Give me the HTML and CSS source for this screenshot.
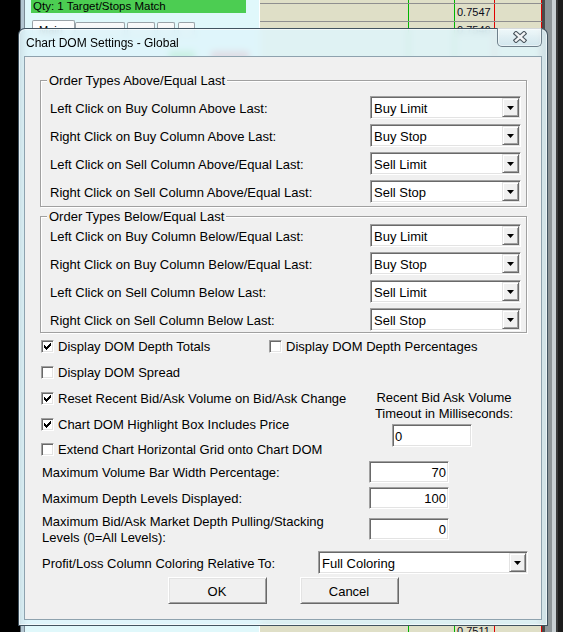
FILE: index.html
```html
<!DOCTYPE html>
<html>
<head>
<meta charset="utf-8">
<title>Chart DOM Settings - Global</title>
<link rel="stylesheet" href="styles.css">
</head>
<body>
<div class="desk">
  <div class="edge-l"></div>
  <div class="panel">
    <div class="qty">Qty: 1 Target/Stops Match</div>
    <div class="tabs">
      <div class="tab t1">Main</div>
      <div class="tab t2"></div>
      <div class="tab t3"></div>
      <div class="tab t4"></div>
      <div class="tab t5"></div>
    </div>
    <div class="pbtns"><span class="pb green"></span><span class="pb red"></span></div>
  </div>
  <div class="ladder">
    <div class="lrow pad"><span></span><span></span><span></span><span></span></div>
    <div class="lrow line"><span></span><span></span><span class="price">0.7547</span><span></span></div>
    <div class="lrow line"><span></span><span></span><span class="price">0.7546</span><span></span></div>
    <div class="lrow fill"><span></span><span></span><span></span><span></span></div>
    <div class="lrow line"><span></span><span></span><span class="price">0.7511</span><span></span></div>
  </div>
  <div class="edge-r"></div>
</div>

<div class="dialog">
  <div class="titlebar">
    <div class="title">Chart DOM Settings - Global</div>
    <div class="close">
      <svg width="14" height="12" viewBox="0 0 14 12">
        <path d="M3 2.5 L11 9.5 M11 2.5 L3 9.5" stroke="#4a565e" stroke-width="4.6" stroke-linecap="square" fill="none"/>
        <path d="M3 2.5 L11 9.5 M11 2.5 L3 9.5" stroke="#f2f4f5" stroke-width="2.4" stroke-linecap="square" fill="none"/>
      </svg>
    </div>
  </div>
  <div class="client">
    <fieldset class="grp g1">
      <legend>Order Types Above/Equal Last</legend>
      <div class="rows">
        <div class="frow"><span class="lbl">Left Click on Buy Column Above Last:</span><div class="combo"><span class="ctext">Buy Limit</span><span class="cbtn"><svg width="7" height="4" viewBox="0 0 7 4"><path d="M0 0h7L3.5 4z"/></svg></span></div></div>
        <div class="frow"><span class="lbl">Right Click on Buy Column Above Last:</span><div class="combo"><span class="ctext">Buy Stop</span><span class="cbtn"><svg width="7" height="4" viewBox="0 0 7 4"><path d="M0 0h7L3.5 4z"/></svg></span></div></div>
        <div class="frow"><span class="lbl">Left Click on Sell Column Above/Equal Last:</span><div class="combo"><span class="ctext">Sell Limit</span><span class="cbtn"><svg width="7" height="4" viewBox="0 0 7 4"><path d="M0 0h7L3.5 4z"/></svg></span></div></div>
        <div class="frow"><span class="lbl">Right Click on Sell Column Above/Equal Last:</span><div class="combo"><span class="ctext">Sell Stop</span><span class="cbtn"><svg width="7" height="4" viewBox="0 0 7 4"><path d="M0 0h7L3.5 4z"/></svg></span></div></div>
      </div>
    </fieldset>
    <fieldset class="grp g2">
      <legend>Order Types Below/Equal Last</legend>
      <div class="rows">
        <div class="frow"><span class="lbl">Left Click on Buy Column Below/Equal Last:</span><div class="combo"><span class="ctext">Buy Limit</span><span class="cbtn"><svg width="7" height="4" viewBox="0 0 7 4"><path d="M0 0h7L3.5 4z"/></svg></span></div></div>
        <div class="frow"><span class="lbl">Right Click on Buy Column Below/Equal Last:</span><div class="combo"><span class="ctext">Buy Stop</span><span class="cbtn"><svg width="7" height="4" viewBox="0 0 7 4"><path d="M0 0h7L3.5 4z"/></svg></span></div></div>
        <div class="frow"><span class="lbl">Left Click on Sell Column Below Last:</span><div class="combo"><span class="ctext">Sell Limit</span><span class="cbtn"><svg width="7" height="4" viewBox="0 0 7 4"><path d="M0 0h7L3.5 4z"/></svg></span></div></div>
        <div class="frow"><span class="lbl">Right Click on Sell Column Below Last:</span><div class="combo"><span class="ctext">Sell Stop</span><span class="cbtn"><svg width="7" height="4" viewBox="0 0 7 4"><path d="M0 0h7L3.5 4z"/></svg></span></div></div>
      </div>
    </fieldset>

    <div class="checks">
      <div class="crow two">
        <div class="chk"><span class="box"><svg width="7" height="7" viewBox="0 0 7 7"><path d="M6 0h1v1h-1zM5 1h2v1h-2zM0 2h1v1h-1zM4 2h3v1h-3zM0 3h2v1h-2zM3 3h3v1h-3zM0 4h5v1h-5zM1 5h3v1h-3zM2 6h1v1h-1z"/></svg></span><span class="lbl">Display DOM Depth Totals</span></div>
        <div class="chk"><span class="box"></span><span class="lbl">Display DOM Depth Percentages</span></div>
      </div>
      <div class="crow"><div class="chk"><span class="box"></span><span class="lbl">Display DOM Spread</span></div></div>
      <div class="mid">
        <div class="crow"><div class="chk"><span class="box"><svg width="7" height="7" viewBox="0 0 7 7"><path d="M6 0h1v1h-1zM5 1h2v1h-2zM0 2h1v1h-1zM4 2h3v1h-3zM0 3h2v1h-2zM3 3h3v1h-3zM0 4h5v1h-5zM1 5h3v1h-3zM2 6h1v1h-1z"/></svg></span><span class="lbl">Reset Recent Bid/Ask Volume on Bid/Ask Change</span></div></div>
        <div class="crow"><div class="chk"><span class="box"><svg width="7" height="7" viewBox="0 0 7 7"><path d="M6 0h1v1h-1zM5 1h2v1h-2zM0 2h1v1h-1zM4 2h3v1h-3zM0 3h2v1h-2zM3 3h3v1h-3zM0 4h5v1h-5zM1 5h3v1h-3zM2 6h1v1h-1z"/></svg></span><span class="lbl">Chart DOM Highlight Box Includes Price</span></div></div>
        <div class="crow"><div class="chk"><span class="box"></span><span class="lbl">Extend Chart Horizontal Grid onto Chart DOM</span></div></div>
        <div class="timeout">
          <div class="tlabel">Recent Bid Ask Volume<br>Timeout in Milliseconds:</div>
          <div class="edit lft">0</div>
        </div>
      </div>
    </div>

    <div class="nums">
      <span class="lbl">Maximum Volume Bar Width Percentage:</span><div class="edit">70</div>
      <span class="lbl">Maximum Depth Levels Displayed:</span><div class="edit">100</div>
      <span class="lbl">Maximum Bid/Ask Market Depth Pulling/Stacking<br>Levels (0=All Levels):</span><div class="edit">0</div>
    </div>

    <div class="prow">
      <span class="lbl">Profit/Loss Column Coloring Relative To:</span>
      <div class="combo wide"><span class="ctext">Full Coloring</span><span class="cbtn"><svg width="7" height="4" viewBox="0 0 7 4"><path d="M0 0h7L3.5 4z"/></svg></span></div>
    </div>

    <div class="btns">
      <div class="btn">OK</div>
      <div class="btn">Cancel</div>
    </div>
  </div>
</div>
</body>
</html>
```

FILE: styles.css
```css
* { box-sizing: border-box; }
html, body { margin: 0; padding: 0; }
body {
  width: 563px;
  height: 632px;
  overflow: hidden;
  position: relative;
  background: #000;
  font-family: "Liberation Sans", Arial, sans-serif;
  font-size: 13px;
  line-height: 16px;
  color: #000;
}

/* ---------- application behind the dialog ---------- */
.desk { display: flex; height: 632px; }
.edge-l {
  width: 25px;
  background: linear-gradient(90deg, #000 0 20px, #56626a 20px 21px, #b3c6d1 21px 24px, #7b8b95 24px 25px);
}
.panel {
  width: 235px;
  background: #e0f8fb;
  border-right: 1px solid #fff;
  display: flex;
  flex-direction: column;
}
.qty {
  margin-left: 6px;
  width: 215px;
  height: 13px;
  background: #4ccd52;
  font-size: 11.5px;
  line-height: 13px;
  padding-left: 2px;
  white-space: nowrap;
  overflow: hidden;
}
.tabs { display: flex; align-items: flex-start; margin: 7px 0 0 7px; height: 16px; }
.tab {
  height: 16px;
  border: 1px solid #9aa3a8;
  border-bottom: none;
  border-radius: 2px 2px 0 0;
  background: linear-gradient(#fbfbfb, #e6e9eb);
  font-size: 11px;
  line-height: 14px;
  padding: 2px 0 0 6px;
  margin-top: 2px;
}
.t1 { width: 43px; margin-top: 0; background: #fdfdfd; }
.t2 { width: 50px; }
.t3 { width: 28px; margin-left: 2px; }
.t4 { width: 18px; margin-left: 2px; }
.t5 { width: 17px; margin-left: 3px; }
.pbtns { display: flex; margin-top: 15px; height: 12px; }
.pb { display: block; height: 12px; border-radius: 2px; }
.pb.green { width: 26px; margin-left: 144px; background: #54d35e; }
.pb.red { width: 38px; margin-left: 16px; background: #e2576a; }

.ladder {
  width: 282px;
  background: #dfdfc7;
  display: flex;
  flex-direction: column;
}
.lrow { display: grid; grid-template-columns: 148px 46px 40px 48px; height: 18px; flex: none; }
.lrow.pad { height: 3px; }
.lrow.fill { height: 583px; }
.lrow.line { border-top: 1px solid #8f8f8f; }
.lrow > span { border-left: 1px solid transparent; }
.lrow > span:nth-child(2), .lrow > span:nth-child(3) { border-left-color: #00b400; }
.lrow > span:nth-child(4) { border-left-color: #e00000; border-right: 1px solid #e00000; }
.price { font-size: 11px; line-height: 17px; padding-left: 2px; color: #0b0b1a; }

.edge-r {
  flex: 1;
  background: linear-gradient(90deg, #4a4a4a 0 3px, #8e9598 3px 10px, #c9d0d3 10px 14px, #3b3b3b 14px 16px, #1c1c1c 16px);
}

/* ---------- dialog ---------- */
.dialog {
  position: absolute;
  left: 18px;
  top: 28px;
  width: 530px;
  height: 598px;
  border: 1px solid rgba(38, 56, 70, 0.85);
  border-radius: 7px 7px 0 0;
  background: rgba(222, 244, 250, 0.86);
  backdrop-filter: blur(3px);
  box-shadow: inset 0 0 0 1px rgba(255, 255, 255, 0.6);
  display: flex;
  flex-direction: column;
}
.titlebar { height: 27px; display: flex; align-items: flex-start; justify-content: space-between; flex: none; }
.title { margin: 7px 0 0 7px; font-size: 12px; line-height: 15px; }
.close {
  width: 45px;
  height: 19px;
  margin: -1px 5px 0 0;
  border: 1px solid #6f808b;
  border-top: none;
  border-radius: 0 0 5px 5px;
  background: linear-gradient(rgba(255,255,255,0.55), rgba(200,222,232,0.6));
  box-shadow: inset 0 0 0 1px rgba(255,255,255,0.5);
  display: flex;
  align-items: center;
  justify-content: center;
}
.close svg { display: block; }
.client {
  flex: 1;
  margin: 0 5px 5px;
  border: 1px solid #8ea2ae;
  background: #f0f0f0;
}

/* nudge label text 1px lower without changing box size */
.lbl { padding-top: 1px; margin-bottom: -1px; }

/* group boxes */
.grp {
  margin: 0 14px 0 15px;
  padding: 8px 5px 3px 9px;
  border: 1px solid #a0a0a0;
  box-shadow: 1px 1px 0 #fff, inset 1px 1px 0 #fff;
  min-width: 0;
}
.g1 { margin-top: 16px; }
.g2 { margin-top: 2px; padding-top: 0; padding-bottom: 1px; }
legend {
  padding: 0 2px;
  margin-left: -3px;
  line-height: 15px;
  background: #f0f0f0;
}
.rows { display: flex; flex-direction: column; gap: 5px; }
.frow { height: 23px; display: flex; align-items: center; justify-content: space-between; white-space: nowrap; }

/* combo box */
.combo {
  width: 151px;
  height: 23px;
  display: flex;
  padding: 1px;
  border: 1px solid;
  border-color: #a0a0a0 #fff #fff #a0a0a0;
  box-shadow: inset 1px 1px 0 #696969, inset -1px -1px 0 #e3e3e3;
  background: #fff;
  flex: none;
}
.combo.wide { width: 210px; }
.ctext { flex: 1; padding: 1px 0 0 2px; line-height: 19px; white-space: nowrap; overflow: hidden; }
.cbtn {
  width: 17px;
  height: 19px;
  border: 1px solid;
  border-color: #e3e3e3 #696969 #696969 #e3e3e3;
  box-shadow: inset 1px 1px 0 #fff, inset -1px -1px 0 #a0a0a0;
  background: #f0f0f0;
  display: flex;
  align-items: center;
  justify-content: center;
  padding-top: 1px;
}
.cbtn svg { display: block; }

/* edit box */
.edit {
  width: 80px;
  height: 22px;
  border: 1px solid;
  border-color: #a0a0a0 #fff #fff #a0a0a0;
  box-shadow: inset 1px 1px 0 #696969, inset -1px -1px 0 #e3e3e3;
  background: #fff;
  padding: 1px 2px 0 2px;
  line-height: 20px;
  text-align: right;
}
.edit.lft { text-align: left; height: 23px; line-height: 21px; margin: 2px 0 0 19px; }

/* checkboxes */
.checks { padding-left: 16px; }
.crow { height: 26px; display: flex; align-items: center; white-space: nowrap; }
.chk { display: flex; align-items: center; }
.two .chk:first-child { width: 228px; }
.box {
  width: 13px;
  height: 13px;
  flex: none;
  margin-right: 4px;
  padding: 1px;
  border: 1px solid;
  border-color: #a0a0a0 #fff #fff #a0a0a0;
  box-shadow: inset 1px 1px 0 #696969, inset -1px -1px 0 #e3e3e3;
  background: #fff;
  display: flex;
  align-items: center;
  justify-content: center;
}
.box svg { display: block; }

.mid { display: grid; grid-template-columns: 332px auto; grid-template-rows: 26px 26px 24px; }
.mid .crow { grid-column: 1; height: auto; }
.timeout { grid-column: 2; grid-row: 1 / span 3; padding-top: 5px; }
.tlabel { width: 142px; text-align: center; white-space: nowrap; }

/* numeric rows */
.nums {
  display: grid;
  grid-template-columns: 327px 80px;
  row-gap: 4px;
  align-items: center;
  padding-left: 17px;
  white-space: nowrap;
}
.prow {
  display: flex;
  align-items: center;
  justify-content: space-between;
  margin-top: 6px;
  padding: 0 13px 0 17px;
  white-space: nowrap;
}

/* push buttons */
.btns { display: flex; justify-content: center; gap: 33px; margin-top: 3px; }
.btn {
  width: 99px;
  height: 27px;
  border: 1px solid;
  border-color: #fff #696969 #696969 #fff;
  box-shadow: inset 1px 1px 0 #e3e3e3, inset -1px -1px 0 #a0a0a0;
  background: #f0f0f0;
  display: flex;
  align-items: center;
  justify-content: center;
  padding-top: 2px;
}
```
